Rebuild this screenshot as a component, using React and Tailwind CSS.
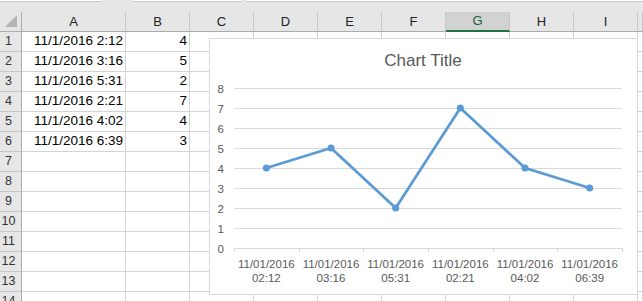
import React from 'react'

const COLS = [
  { key: 'A', w: 'w-[104px]' },
  { key: 'B', w: 'w-[64px]' },
  { key: 'C', w: 'w-[64px]' },
  { key: 'D', w: 'w-[64px]' },
  { key: 'E', w: 'w-[64px]' },
  { key: 'F', w: 'w-[64px]' },
  { key: 'G', w: 'w-[64px]', selected: true },
  { key: 'H', w: 'w-[64px]' },
  { key: 'I', w: 'w-[64px]' },
  { key: '', w: 'flex-1' },
]

const DATA = [
  ['11/1/2016 2:12', 4, '02:12'],
  ['11/1/2016 3:16', 5, '03:16'],
  ['11/1/2016 5:31', 2, '05:31'],
  ['11/1/2016 2:21', 7, '02:21'],
  ['11/1/2016 4:02', 4, '04:02'],
  ['11/1/2016 6:39', 3, '06:39'],
]

const ROWS = Array.from({ length: 14 }, (_, i) => i + 1)

// chart geometry in page coordinates
const PLOT_L = 234
const PLOT_R = 622
const Y0 = 248
const STEP = 20
const CAT = (PLOT_R - PLOT_L) / DATA.length

export default function App(){
  return (
    <div className="relative w-[643px] h-[301px] overflow-hidden bg-white font-['Liberation_Sans',Arial,sans-serif] text-[#111]">
      {/* formula bar remains */}
      <div className="h-[12px] bg-[#e6e6e6] flex items-start">
        <div className="w-[102px] h-[2px] bg-white border-b border-[#c6c6c6]" />
        <div className="w-[31px]" />
        <div className="w-[109px] h-[2px] bg-white border-b border-[#c6c6c6]" />
        <div className="w-[5px]" />
        <div className="flex-1 h-[2px] bg-white border-b border-[#c6c6c6]" />
      </div>

      {/* column headers */}
      <div className="flex h-[20px] bg-[#e6e6e6]">
        <div className="w-[22px] border-r border-b border-[#ababab] flex items-end justify-end pr-[4px] pb-[4px]">
          <svg width="12" height="12" viewBox="0 0 12 12"><polygon points="12,0 12,12 0,12" fill="#b4b4b4" /></svg>
        </div>
        {COLS.map((c, i) => (
          <div key={i} className={`${c.w} flex items-center justify-center text-[13px] border-r border-[#c6c6c6] ${c.selected ? 'bg-[#d2d2d2] border-b-2 border-b-[#217346] text-[#1d5e3a]' : 'border-b border-b-[#ababab] text-[#222]'}`}>
            {c.key}
          </div>
        ))}
      </div>

      {/* rows */}
      {ROWS.map(r => {
        const d = DATA[r - 1]
        return (
          <div key={r} className="flex h-[20px]">
            <div className="w-[22px] bg-[#e6e6e6] border-r border-r-[#ababab] border-b border-b-[#c6c6c6] flex items-center justify-center pr-[4px] text-[12.5px] text-[#333]">
              {r}
            </div>
            {COLS.map((c, i) => (
              <div key={i} className={`${c.w} border-r border-b border-[#d4d4d4] flex items-center justify-end pr-[2px] text-[13.5px] text-black`}>
                {d && i === 0 ? d[0] : null}
                {d && i === 1 ? d[1] : null}
              </div>
            ))}
          </div>
        )
      })}

      {/* chart object floating over the sheet */}
      <div className="absolute left-[209px] top-[38px] w-[429px] h-[257px] bg-white border border-[#d9d9d9]">
        <svg className="absolute left-[-1px] top-[-1px]" width="429" height="257" viewBox="209 38 429 257">
          <text x="423" y="66" textAnchor="middle" fontSize="17" fill="#595959">Chart Title</text>

          {Array.from({ length: 9 }, (_, v) => (
            <g key={v}>
              <line x1={PLOT_L} x2={PLOT_R} y1={Y0 - v * STEP + 0.5} y2={Y0 - v * STEP + 0.5} stroke="#d9d9d9" strokeWidth="1" />
              <text x="224" y={Y0 - v * STEP + 4.5} textAnchor="end" fontSize="11.5" fill="#595959">{v}</text>
            </g>
          ))}

          {Array.from({ length: DATA.length + 1 }, (_, i) => (
            <line key={i} x1={Math.round(PLOT_L + i * CAT) + 0.5} x2={Math.round(PLOT_L + i * CAT) + 0.5} y1={Y0} y2={Y0 + 4} stroke="#d9d9d9" strokeWidth="1" />
          ))}

          <polyline
            points={DATA.map((d, i) => `${PLOT_L + CAT * (i + 0.5)},${Y0 - d[1] * STEP}`).join(' ')}
            fill="none" stroke="#5b9bd5" strokeWidth="2.75" strokeLinejoin="round" strokeLinecap="round"
          />
          {DATA.map((d, i) => (
            <circle key={i} cx={PLOT_L + CAT * (i + 0.5)} cy={Y0 - d[1] * STEP} r="3.5" fill="#5b9bd5" />
          ))}

          {DATA.map((d, i) => (
            <g key={i} fontSize="11.5" fill="#595959" textAnchor="middle">
              <text x={PLOT_L + CAT * (i + 0.5)} y="268">11/01/2016</text>
              <text x={PLOT_L + CAT * (i + 0.5)} y="282">{d[2]}</text>
            </g>
          ))}
        </svg>
      </div>
    </div>
  )
}
